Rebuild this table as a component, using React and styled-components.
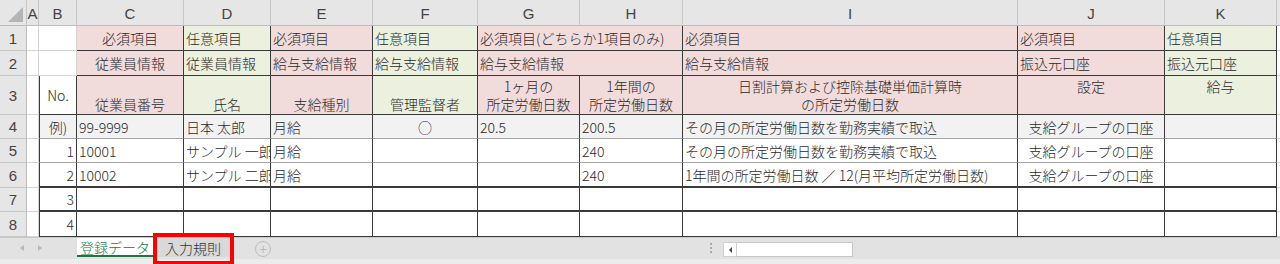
import React from 'react';
import styled, { createGlobalStyle } from 'styled-components';

const GlobalStyle = createGlobalStyle`
  html, body {
    margin: 0;
    padding: 0;
    background: #ffffff;
  }
  body {
    font-family: "Noto Sans CJK JP", "Noto Sans", sans-serif;
    overflow: hidden;
  }
`;

const fills = {
  pink: '#f2dcdb',
  green: '#ebf1de',
  gray: '#f2f2f2',
  white: '#ffffff',
};

const Window = styled.div`
  width: 1280px;
  height: 264px;
  display: flex;
  flex-direction: column;
  background: #ffffff;
`;

const Sheet = styled.div`
  display: grid;
  grid-template-columns: 27px 12px 38px 107px 87px 102px 105px 102px 103px 335px 147px 112px 1fr;
  grid-template-rows: 26px 25px 25px 39px 24px 24px 25px 24px 25px;
  height: 237px;
`;

const Corner = styled.div`
  position: relative;
  background: #e6e6e6;
  border-right: 1px solid #c6c6c6;
  border-bottom: 1px solid #bdbdbd;
  box-sizing: border-box;
  &::after {
    content: '';
    position: absolute;
    right: 3px;
    bottom: 3px;
    width: 0;
    height: 0;
    border-left: 15px solid transparent;
    border-bottom: 15px solid #b4b4b4;
  }
`;

const ColHead = styled.div`
  background: #e6e6e6;
  border-right: 1px solid #c6c6c6;
  border-bottom: 1px solid #bdbdbd;
  box-sizing: border-box;
  display: flex;
  align-items: center;
  justify-content: center;
  font-family: "Liberation Sans", Arial, sans-serif;
  font-size: 15px;
  color: #444;
  padding-top: 2px;
`;

const RowHead = styled.div`
  background: #e6e6e6;
  border-right: 1px solid #bdbdbd;
  border-bottom: 1px solid #c6c6c6;
  box-sizing: border-box;
  display: flex;
  align-items: center;
  justify-content: center;
  font-family: "Liberation Sans", Arial, sans-serif;
  font-size: 15px;
  color: #444;
`;

const Cell = styled.div`
  box-sizing: border-box;
  background: ${(p) => fills[p.$fill || 'white']};
  border-right: 1px solid ${(p) => (p.$line ? '#3a3a3a' : '#d4d4d4')};
  border-bottom: ${(p) => p.$bottom || `1px solid ${p.$line ? '#3a3a3a' : '#d4d4d4'}`};
  border-left: ${(p) => (p.$leftLine ? '1px solid #3a3a3a' : 'none')};
  grid-column: ${(p) => (p.$span ? `span ${p.$span}` : 'auto')};
  display: flex;
  flex-direction: column;
  justify-content: ${(p) => ({ top: 'flex-start', middle: 'center', bottom: 'flex-end' }[p.$v || 'middle'])};
  text-align: ${(p) => p.$align || 'left'};
  padding: ${(p) => (p.$v === 'bottom' ? '0 2px 1px' : p.$v === 'top' ? '1px 2px 0' : '0 2px')};
  font-size: 14px;
  font-weight: 300;
  line-height: 18px;
  color: #2a2a2a;
  white-space: nowrap;
  overflow: hidden;
`;

const TabBar = styled.div`
  flex: 1;
  display: flex;
  align-items: flex-start;
  background: #e2e2e2;
  border-top: 1px solid #c8c8c8;
  box-sizing: border-box;
  position: relative;
  &::after {
    content: '';
    position: absolute;
    left: 0;
    right: 0;
    bottom: 0;
    height: 5px;
    background: #ececec;
  }
`;

const NavArrows = styled.div`
  width: 77px;
  height: 19px;
  display: flex;
  align-items: center;
  gap: 14px;
  padding-left: 20px;
  box-sizing: border-box;
`;

const Arrow = styled.span`
  width: 0;
  height: 0;
  border-top: 3px solid transparent;
  border-bottom: 3px solid transparent;
  ${(p) => (p.$dir === 'left' ? 'border-right: 4px solid #b8b8b8;' : 'border-left: 4px solid #b8b8b8;')}
`;

const Tab = styled.div`
  position: relative;
  width: ${(p) => p.$w}px;
  height: 19px;
  display: flex;
  align-items: center;
  justify-content: center;
  box-sizing: border-box;
  font-size: 14px;
  font-weight: 300;
  background: ${(p) => (p.$active ? '#ffffff' : '#d9d9d9')};
  color: ${(p) => (p.$active ? '#217346' : '#333')};
  border-bottom: ${(p) => (p.$active ? '2px solid #217346' : 'none')};
  z-index: 1;
`;

const Highlight = styled.div`
  position: absolute;
  left: 0;
  right: -1px;
  top: -5px;
  bottom: -8px;
  border: 4px solid #ff0000;
  pointer-events: none;
`;

const AddButton = styled.div`
  width: 14px;
  height: 14px;
  margin: 3px 0 0 22px;
  border: 1px solid #bdbdbd;
  border-radius: 50%;
  display: flex;
  align-items: center;
  justify-content: center;
  color: #bdbdbd;
  font-family: "Liberation Sans", Arial, sans-serif;
  font-size: 14px;
  line-height: 1;
`;

const Splitter = styled.div`
  margin: 5px 0 0 439px;
  display: flex;
  flex-direction: column;
  gap: 2px;
  span {
    width: 2px;
    height: 2px;
    background: #a8a8a8;
  }
`;

const ScrollBox = styled.div`
  margin: 4px 0 0 11px;
  display: flex;
  height: 15px;
  z-index: 1;
`;

const ScrollBtn = styled.div`
  width: 14px;
  box-sizing: border-box;
  background: #ffffff;
  border: 1px solid #d0d0d0;
  display: flex;
  align-items: center;
  justify-content: center;
  &::before {
    content: '';
    border-top: 3px solid transparent;
    border-bottom: 3px solid transparent;
    border-right: 3px solid #444;
  }
`;

const Thumb = styled.div`
  width: 116px;
  box-sizing: border-box;
  background: #ffffff;
  border: 1px solid #c6c6c6;
  border-left: none;
`;

const columns = ['A', 'B', 'C', 'D', 'E', 'F', 'G', 'H', 'I', 'J', 'K'];

const light = '1px solid #a6a6a6';
const heavy = '2px solid #3a3a3a';

const dataRows = [
  {
    no: 4, b: '例)', bAlign: 'center', fill: 'gray', bottom: light,
    c: '99-9999', d: '日本 太郎', e: '月給', f: '○', g: '20.5', h: '200.5',
    i: 'その月の所定労働日数を勤務実績で取込', j: '支給グループの口座',
  },
  {
    no: 5, b: '1', bottom: light,
    c: '10001', d: 'サンプル 一郎', e: '月給', h: '240',
    i: 'その月の所定労働日数を勤務実績で取込', j: '支給グループの口座',
  },
  {
    no: 6, b: '2', bottom: heavy,
    c: '10002', d: 'サンプル 二郎', e: '月給', h: '240',
    i: '1年間の所定労働日数 ／ 12(月平均所定労働日数)', j: '支給グループの口座',
  },
  { no: 7, b: '3', bottom: heavy },
  { no: 8, b: '4', bottom: '1px solid #3a3a3a' },
];

function DataRow({ row }) {
  const fill = row.fill || 'white';
  return (
    <>
      <RowHead>{row.no}</RowHead>
      <Cell />
      <Cell $line $leftLine $fill={fill} $bottom={row.bottom} $align={row.bAlign || 'right'}>{row.b}</Cell>
      <Cell $line $fill={fill} $bottom={row.bottom}>{row.c}</Cell>
      <Cell $line $fill={fill} $bottom={row.bottom}>{row.d}</Cell>
      <Cell $line $fill={fill} $bottom={row.bottom}>{row.e}</Cell>
      <Cell $line $fill={fill} $bottom={row.bottom} $align="center">{row.f}</Cell>
      <Cell $line $fill={fill} $bottom={row.bottom}>{row.g}</Cell>
      <Cell $line $fill={fill} $bottom={row.bottom}>{row.h}</Cell>
      <Cell $line $fill={fill} $bottom={row.bottom}>{row.i}</Cell>
      <Cell $line $fill={fill} $bottom={row.bottom} $align="center">{row.j}</Cell>
      <Cell $line $fill={fill} $bottom={row.bottom} />
      <Cell />
    </>
  );
}

export default function App() {
  return (
    <Window>
      <GlobalStyle />
      <Sheet>
        <Corner />
        {columns.map((c) => (
          <ColHead key={c}>{c}</ColHead>
        ))}
        <ColHead />

        <RowHead>1</RowHead>
        <Cell />
        <Cell />
        <Cell $line $fill="pink" $align="center">必須項目</Cell>
        <Cell $line $fill="green">任意項目</Cell>
        <Cell $line $fill="pink">必須項目</Cell>
        <Cell $line $fill="green">任意項目</Cell>
        <Cell $line $fill="pink" $span={2}>必須項目(どちらか1項目のみ)</Cell>
        <Cell $line $fill="pink">必須項目</Cell>
        <Cell $line $fill="pink">必須項目</Cell>
        <Cell $line $fill="green">任意項目</Cell>
        <Cell />

        <RowHead>2</RowHead>
        <Cell />
        <Cell />
        <Cell $line $fill="pink" $align="center">従業員情報</Cell>
        <Cell $line $fill="green">従業員情報</Cell>
        <Cell $line $fill="pink">給与支給情報</Cell>
        <Cell $line $fill="green">給与支給情報</Cell>
        <Cell $line $fill="pink" $span={2}>給与支給情報</Cell>
        <Cell $line $fill="pink">給与支給情報</Cell>
        <Cell $line $fill="pink">振込元口座</Cell>
        <Cell $line $fill="green">振込元口座</Cell>
        <Cell />

        <RowHead>3</RowHead>
        <Cell />
        <Cell $line $leftLine $align="center">No.</Cell>
        <Cell $line $fill="pink" $align="center" $v="bottom">従業員番号</Cell>
        <Cell $line $fill="green" $align="center" $v="bottom">氏名</Cell>
        <Cell $line $fill="pink" $align="center" $v="bottom">支給種別</Cell>
        <Cell $line $fill="green" $align="center" $v="bottom">管理監督者</Cell>
        <Cell $line $fill="pink" $align="center">1ヶ月の<br />所定労働日数</Cell>
        <Cell $line $fill="pink" $align="center">1年間の<br />所定労働日数</Cell>
        <Cell $line $fill="pink" $align="center" $v="top">日割計算および控除基礎単価計算時<br />の所定労働日数</Cell>
        <Cell $line $fill="pink" $align="center" $v="top">設定</Cell>
        <Cell $line $fill="green" $align="center" $v="top">給与</Cell>
        <Cell />

        {dataRows.map((row) => (
          <DataRow key={row.no} row={row} />
        ))}
      </Sheet>

      <TabBar>
        <NavArrows>
          <Arrow $dir="left" />
          <Arrow $dir="right" />
        </NavArrows>
        <Tab $w={76} $active>登録データ</Tab>
        <Tab $w={80}>
          入力規則
          <Highlight />
        </Tab>
        <AddButton>+</AddButton>
        <Splitter>
          <span />
          <span />
          <span />
        </Splitter>
        <ScrollBox>
          <ScrollBtn />
          <Thumb />
        </ScrollBox>
      </TabBar>
    </Window>
  );
}
